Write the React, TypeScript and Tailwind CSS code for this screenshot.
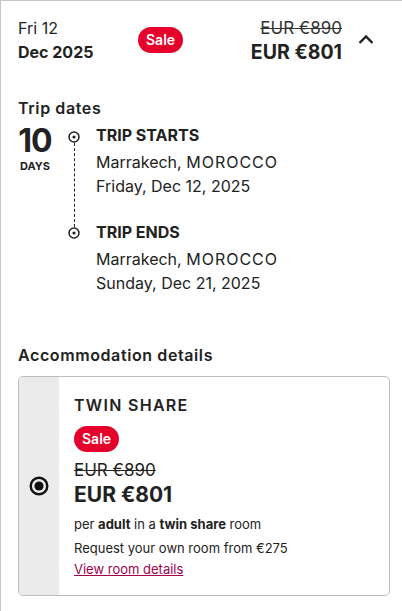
import React from "react";

function Sale() {
  return (
    <span className="inline-flex items-center justify-center h-[26px] px-[8px] rounded-full bg-[#e4002b] text-white text-[14px] font-semibold leading-none">
      Sale
    </span>
  );
}

function Dot() {
  return (
    <svg width="12" height="12" viewBox="0 0 12 12" className="block">
      <circle cx="6" cy="6" r="5" fill="white" stroke="#222" strokeWidth="1.5" />
      <circle cx="6" cy="6" r="1.6" fill="#222" />
    </svg>
  );
}

export default function App() {
  return (
    <div className="w-[402px] h-[611px] bg-white border-t border-l border-[#c6c6cc] overflow-hidden font-['Inter',sans-serif] text-[#222]">
      {/* header */}
      <div className="flex items-center pl-[17px] pr-[28px] pt-[15px]">
        <div className="w-[120px] text-[16px] leading-[24px]">
          <div>Fri 12</div>
          <div className="font-bold">Dec 2025</div>
        </div>
        <Sale />
        <div className="flex-1" />
        <div className="text-right leading-[24px]">
          <div className="text-[17px] line-through text-[#333]">EUR €890</div>
          <div className="text-[19.5px] font-bold">EUR €801</div>
        </div>
        <svg width="16" height="12" viewBox="0 0 16 12" className="ml-[16px] mb-[2px]">
          <path d="M1.5 10 L8 3.5 L14.5 10" fill="none" stroke="#222" strokeWidth="2.4" />
        </svg>
      </div>

      {/* trip dates */}
      <div className="pl-[17px] pt-[33px]">
        <div className="text-[16px] font-semibold leading-[22px] tracking-[0.6px]">Trip dates</div>
        <div className="flex mt-[4px]">
          <div className="w-[34px] flex flex-col items-center">
            <div className="text-[32px] font-bold leading-[36px] tracking-[-1px]">10</div>
            <div className="text-[11px] font-bold leading-[14px] mt-[0px]">DAYS</div>
          </div>
          <div className="w-[44px] flex flex-col items-center pt-[8px]">
            <Dot />
            <div className="h-[84px] border-l border-dashed border-[#222]" />
            <Dot />
          </div>
          <div className="text-[16px] leading-[24px]">
            <div className="font-bold">TRIP STARTS</div>
            <div className="mt-[3px]">Marrakech, <span className="tracking-[1px]">MOROCCO</span></div>
            <div>Friday, Dec 12, 2025</div>
            <div className="font-bold mt-[22px]">TRIP ENDS</div>
            <div className="mt-[3px]">Marrakech, <span className="tracking-[1px]">MOROCCO</span></div>
            <div>Sunday, Dec 21, 2025</div>
          </div>
        </div>
      </div>

      {/* accommodation */}
      <div className="pl-[17px] pt-[49px]">
        <div className="text-[16px] font-semibold leading-[22px] tracking-[0.6px]">Accommodation details</div>
        <div className="mt-[10px] w-[372px] h-[220px] border border-[#bdbdbd] rounded-[5px] flex overflow-hidden">
          <div className="w-[40px] bg-[#ebebeb] flex items-center justify-center">
            <svg width="20" height="20" viewBox="0 0 20 20">
              <circle cx="10" cy="10" r="8.3" fill="none" stroke="#111" strokeWidth="2.4" />
              <circle cx="10" cy="10" r="4.6" fill="#111" />
            </svg>
          </div>
          <div className="pl-[15px] pt-[17px]">
            <div className="text-[16px] font-semibold tracking-[1.3px] leading-[22px]">TWIN SHARE</div>
            <div className="mt-[10px]"><Sale /></div>
            <div className="mt-[7px] text-[17px] leading-[22px] line-through">EUR €890</div>
            <div className="text-[21px] font-bold leading-[28px]">EUR €801</div>
            <div className="mt-[5px] text-[13px] leading-[20px]">
              per <b>adult</b> in a <b>twin share</b> room
            </div>
            <div className="mt-[4px] text-[13px] leading-[20px]">Request your own room from €275</div>
            <div className="mt-[1px] text-[13px] leading-[20px] text-[#a3004f] underline">View room details</div>
          </div>
        </div>
      </div>
    </div>
  );
}
